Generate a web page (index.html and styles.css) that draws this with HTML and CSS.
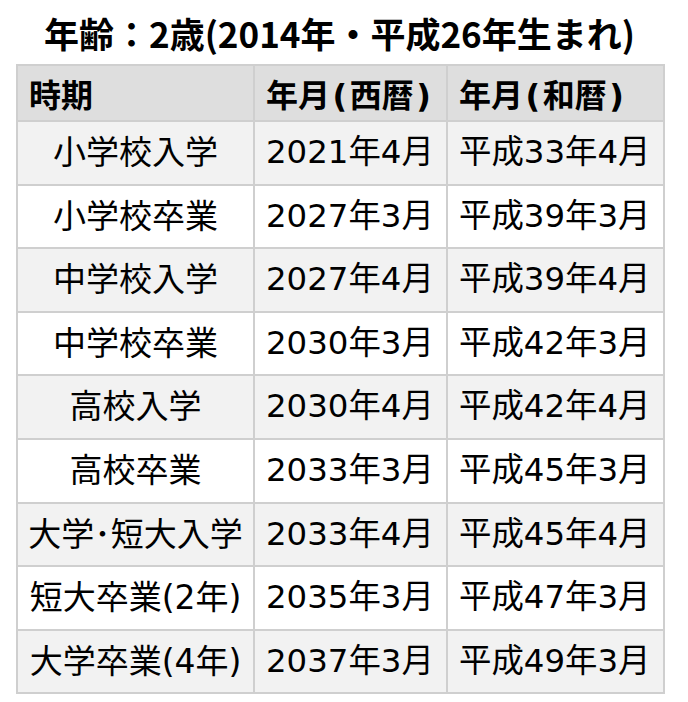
FILE: index.html
```html
<!DOCTYPE html>
<html lang="ja">
<head>
<meta charset="utf-8">
<link rel="stylesheet" href="styles.css">
</head>
<body>
<div class="wrap">
  <h1 class="title">年齢：2歳(2014年・平成26年生まれ)</h1>
  <table class="tbl">
    <colgroup><col class="c1"><col class="c2"><col class="c3"></colgroup>
    <thead>
      <tr><th>時期</th><th>年月<span class="p">(</span>西暦<span class="p">)</span></th><th>年月<span class="p">(</span>和暦<span class="p">)</span></th></tr>
    </thead>
    <tbody>
      <tr><td class="ev">小学校入学</td><td>2021年4月</td><td>平成33年4月</td></tr>
      <tr><td class="ev">小学校卒業</td><td>2027年3月</td><td>平成39年3月</td></tr>
      <tr><td class="ev">中学校入学</td><td>2027年4月</td><td>平成39年4月</td></tr>
      <tr><td class="ev">中学校卒業</td><td>2030年3月</td><td>平成42年3月</td></tr>
      <tr><td class="ev">高校入学</td><td>2030年4月</td><td>平成42年4月</td></tr>
      <tr><td class="ev">高校卒業</td><td>2033年3月</td><td>平成45年3月</td></tr>
      <tr><td class="ev">大学･短大入学</td><td>2033年4月</td><td>平成45年4月</td></tr>
      <tr><td class="ev">短大卒業(2年)</td><td>2035年3月</td><td>平成47年3月</td></tr>
      <tr><td class="ev">大学卒業(4年)</td><td>2037年3月</td><td>平成49年3月</td></tr>
    </tbody>
  </table>
</div>
</body>
</html>
```
FILE: styles.css
```css
html, body {
  margin: 0;
  padding: 0;
  background: #fff;
}
.wrap {
  width: 647px;
  margin-left: 16px;
  color: #000;
}
.title {
  font-family: "Noto Sans CJK JP", sans-serif;
  font-weight: 700;
  font-size: 35px;
  line-height: 40px;
  margin: 13px 0 11px;
  text-align: center;
  letter-spacing: 0;
}
.tbl {
  width: 647px;
  border-collapse: collapse;
  table-layout: fixed;
  border: 2px solid #cfcfcf;
}
.c1 { width: 237px; }
.c2 { width: 193px; }
.c3 { width: 217px; }
.tbl th, .tbl td {
  border: 2px solid #cfcfcf;
  padding: 0 0 0 11px;
  white-space: nowrap;
  overflow: hidden;
}
.tbl th {
  background: #dedede;
  font-family: "Noto Sans CJK JP", sans-serif;
  font-weight: 700;
  font-size: 32px;
  height: 54px;
  line-height: 54px;
  text-align: left;
  vertical-align: middle;
}
.tbl th .p {
  font-family: "DejaVu Sans", sans-serif;
  font-weight: 700;
  line-height: 1;
  margin: 0 2.5px;
}
.tbl td {
  font-family: "DejaVu Sans", "Noto Sans CJK JP", sans-serif;
  font-size: 32.4px;
  line-height: 61.6px;
  text-align: left;
}
.tbl td.ev {
  text-align: center;
  padding: 0;
  font-size: 33px;
}
.tbl tbody tr:nth-child(odd) td { background: #f2f2f2; }
.tbl tbody tr:nth-child(even) td { background: #fff; }
```
